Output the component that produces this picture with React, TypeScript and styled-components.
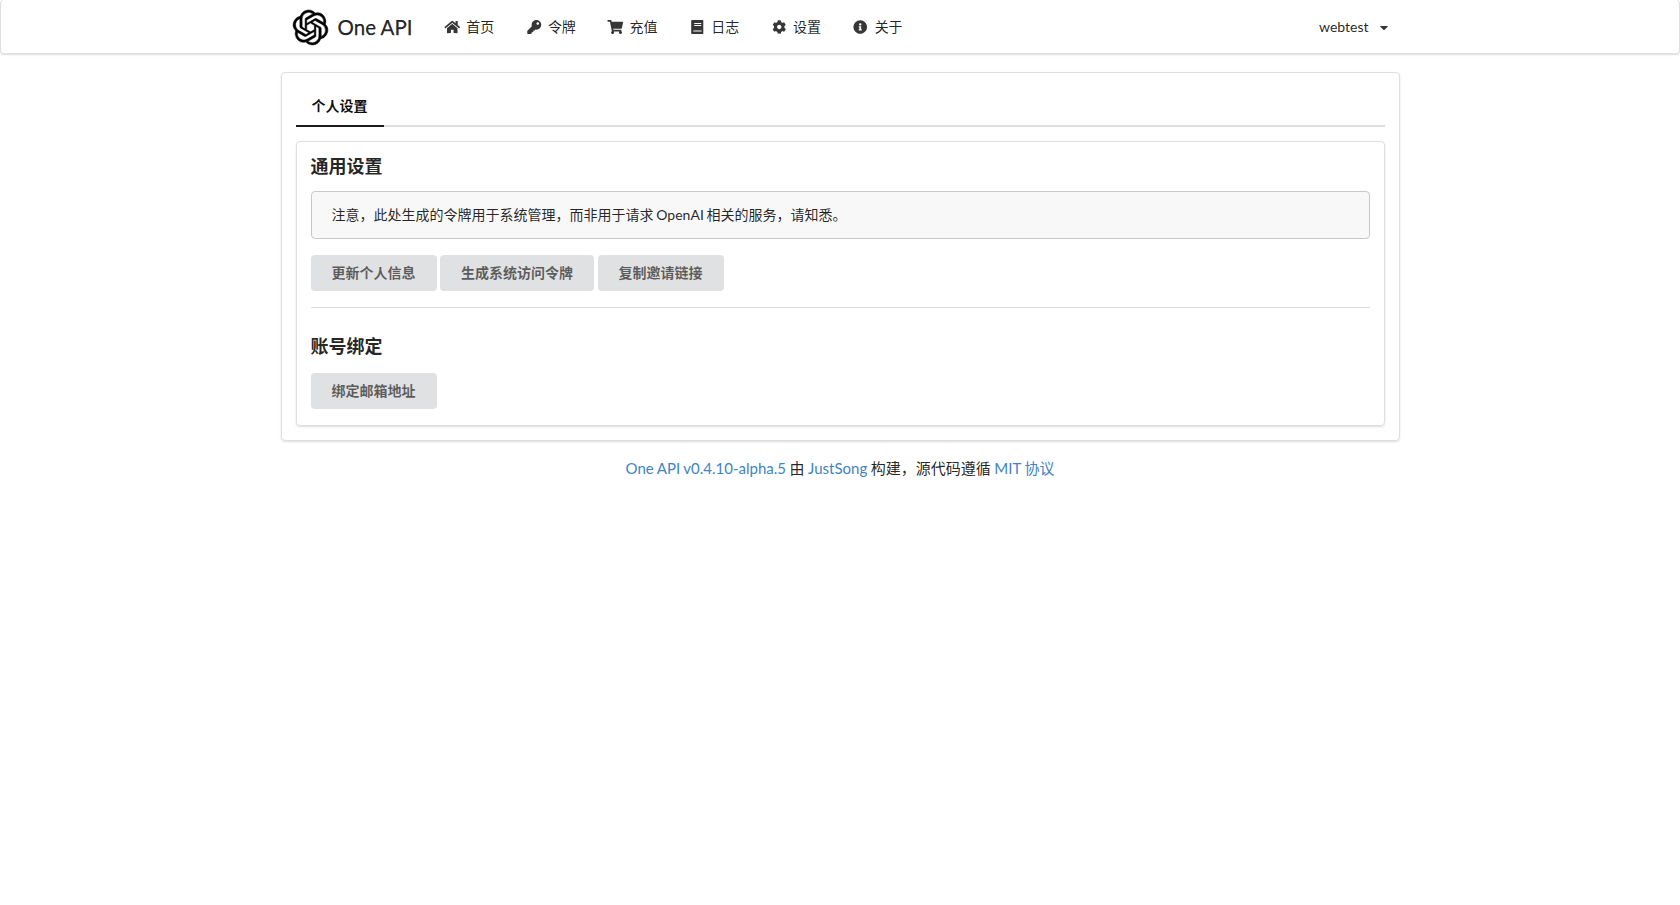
import React from 'react';
import styled, { createGlobalStyle } from 'styled-components';
import { FaHome, FaKey, FaShoppingCart, FaCog, FaInfoCircle, FaCaretDown } from 'react-icons/fa';
import { SiOpenai } from 'react-icons/si';

const GlobalStyle = createGlobalStyle`
  *, *::before, *::after { box-sizing: border-box; }
  body {
    margin: 0;
    background: #fff;
    color: rgba(0, 0, 0, 0.87);
    font-family: Lato, 'Noto Sans CJK SC', sans-serif;
    font-size: 14px;
    line-height: 20px;
  }
`;

const Header = styled.header`
  height: 54px;
  padding-top: 1px;
  border: 1px solid #dededf;
  border-top: 0;
  border-radius: 4px;
  box-shadow: 0 1px 2px 0 rgba(34, 36, 38, 0.15);
`;

const HeaderInner = styled.div`
  width: 1127px;
  height: 52px;
  margin: 0 auto;
  display: flex;
  align-items: center;
`;

const Brand = styled.a`
  display: flex;
  align-items: center;
  width: 152px;
  padding-left: 16px;
  font-size: 20.5px;
  white-space: nowrap;
  -webkit-text-stroke: 0.25px currentColor;
`;

const Logo = styled(SiOpenai)`
  width: 35px;
  height: 35px;
  margin-right: 10px;
  color: #000;
  stroke: #000;
  stroke-width: 0.35px;
  overflow: visible;
`;

const NavItem = styled.a`
  display: flex;
  align-items: center;
  padding: 0 16px;
  white-space: nowrap;
  svg {
    width: 16.5px;
    height: 14px;
    margin-right: 5px;
    opacity: 0.9;
  }
`;

const Navigation = styled.nav`
  display: flex;
  a svg {
    margin-left: -0.5px;
    margin-right: 5.7px;
  }
`;

const UserMenu = styled(NavItem)`
  margin-left: auto;
  padding-right: 14px;
  svg {
    width: 12px;
    height: 13px;
    margin: 0 0 0 9px;
  }
`;

const Main = styled.main`
  width: 1119px;
  margin: 18px auto 0;
`;

const Segment = styled.section`
  padding: 14px;
  border: 1px solid #dededf;
  border-radius: 4px;
  box-shadow: 0 1px 2px 0 rgba(34, 36, 38, 0.15);
`;

const SettingsPanel = styled(Segment)`
  padding: 13px 14px 16px;
`;

const TabBar = styled.nav`
  display: flex;
  height: 40px;
  margin-bottom: 14px;
  border-bottom: 2px solid #dededf;
`;

const Tab = styled.a`
  height: 40px;
  padding: 9px 16px 0;
  border-bottom: 2px solid #1b1c1d;
  color: rgba(0, 0, 0, 0.95);
  font-weight: 700;
`;

const Title = styled.h3<{ $top?: number }>`
  margin: ${({ $top = 0 }) => $top}px 0 0;
  font-size: 18px;
  line-height: 23px;
  font-weight: 700;
`;

const Message = styled.div`
  height: 48px;
  margin: 13px 0 16px;
  padding: 13px 20px;
  border: 1px solid #c7c8c8;
  border-radius: 4px;
  background: #f8f8f9;
  word-spacing: -0.8px;
`;

const Actions = styled.div<{ $top?: number }>`
  display: flex;
  gap: 3.5px;
  margin-top: ${({ $top = 0 }) => $top}px;
`;

const Button = styled.button`
  height: 36px;
  padding: 0 21px 1px;
  border: 0;
  border-radius: 4px;
  background: #e0e1e2;
  color: rgba(0, 0, 0, 0.6);
  font: inherit;
  font-weight: 700;
`;

const Divider = styled.hr`
  height: 1px;
  margin: 16px 0 0;
  border: 0;
  background: #dededf;
`;

const Footer = styled.footer`
  margin-top: 17px;
  font-size: 15px;
  text-align: center;
  word-spacing: -0.3px;
`;

const Link = styled.a`
  color: #4183c4;
`;

const BookIcon = () => (
  <svg viewBox="0 0 16.5 14" fill="currentColor">
    <path fillRule="evenodd" d="M3 0H13.7Q14.3 0 14.3 .6V13.4Q14.3 14 13.7 14H3Q2.2 14 2.2 13.2V.8Q2.2 0 3 0ZM5.3 3V4H12.2V3ZM5.3 5V6H12.2V5ZM4.3 10.5V11.5H12.6V10.5Z" />
  </svg>
);

const navigation = [
  { label: '首页', Icon: FaHome },
  { label: '令牌', Icon: FaKey },
  { label: '充值', Icon: FaShoppingCart },
  { label: '日志', Icon: BookIcon },
  { label: '设置', Icon: FaCog },
  { label: '关于', Icon: FaInfoCircle },
];

export default function App() {
  return (
    <>
      <GlobalStyle />
      <Header>
        <HeaderInner>
          <Brand><Logo />One API</Brand>
          <Navigation>
            {navigation.map(({ label, Icon }) => (
              <NavItem key={label}><Icon />{label}</NavItem>
            ))}
          </Navigation>
          <UserMenu>webtest<FaCaretDown /></UserMenu>
        </HeaderInner>
      </Header>
      <Main>
        <Segment>
          <TabBar><Tab>个人设置</Tab></TabBar>
          <SettingsPanel>
            <Title>通用设置</Title>
            <Message>注意，此处生成的令牌用于系统管理，而非用于请求 OpenAI 相关的服务，请知悉。</Message>
            <Actions>
              <Button>更新个人信息</Button>
              <Button>生成系统访问令牌</Button>
              <Button>复制邀请链接</Button>
            </Actions>
            <Divider />
            <Title $top={27}>账号绑定</Title>
            <Actions $top={15}>
              <Button>绑定邮箱地址</Button>
            </Actions>
          </SettingsPanel>
        </Segment>
      </Main>
      <Footer>
        <Link>One API v0.4.10-alpha.5</Link> 由 <Link>JustSong</Link> 构建，源代码遵循 <Link>MIT 协议</Link>
      </Footer>
    </>
  );
}
